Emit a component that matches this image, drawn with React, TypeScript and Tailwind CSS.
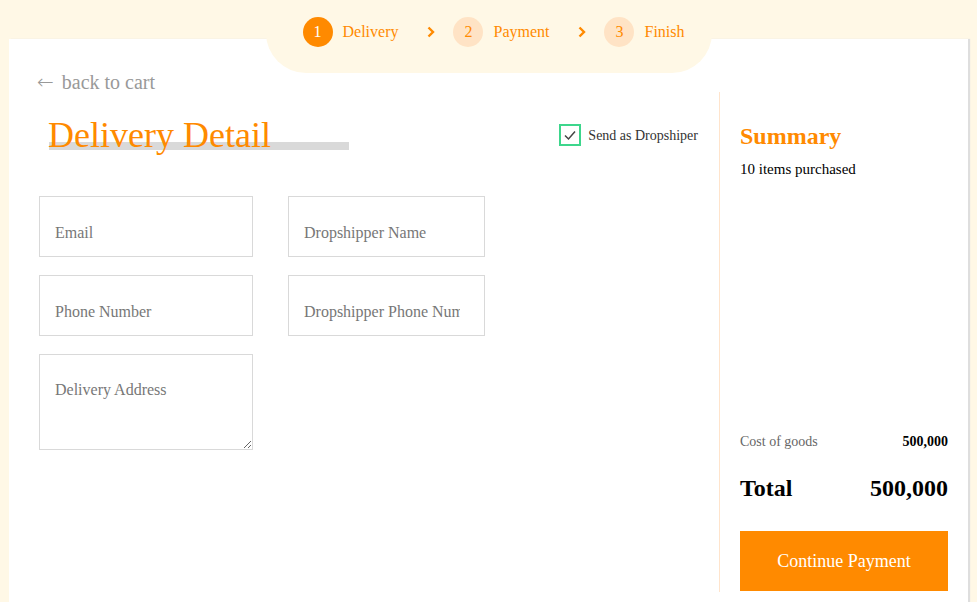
import React from 'react';

const steps = [
    { n: 1, label: 'Delivery', active: true },
    { n: 2, label: 'Payment', active: false },
    { n: 3, label: 'Finish', active: false },
];

const Chevron = () => (
    <svg className="w-[8px] h-[12px]" viewBox="0 0 8 12" fill="none">
        <path d="M1.5 1.5 L6 6 L1.5 10.5" stroke="#FF8A00" strokeWidth="2.4" />
    </svg>
);

const Stepper = () => (
    <div className="absolute top-[-39px] left-1/2 -translate-x-1/2 w-[446px] h-[73px] rounded-b-[40px] bg-[#FFF8E6] flex items-start pt-[17px] pl-[37px]">
        {steps.map((s, i) => (
            <div key={s.n} className="flex items-center">
                <div
                    className={
                        s.active
                            ? 'w-[30px] h-[30px] rounded-full bg-[#FF8A00] text-white flex items-center justify-center text-[16px]'
                            : 'w-[30px] h-[30px] rounded-full bg-[#FFE3C5] text-[#FF8A00] flex items-center justify-center text-[16px]'
                    }
                >
                    {s.n}
                </div>
                <span className="ml-[10px] text-[16px] text-[#FF8A00]">{s.label}</span>
                {i < steps.length - 1 && (
                    <div className="ml-[29px] mr-[18px] flex items-center">
                        <Chevron />
                    </div>
                )}
            </div>
        ))}
    </div>
);

const inputClass =
    'w-full h-[61px] border border-[#d9d9d9] bg-white pt-[22px] pb-[10px] pl-[15px] pr-[24px] text-[16px] leading-[20px] outline-none placeholder:text-[#777]';

export default function App() {
    return (
        <div className="min-h-screen bg-[#FFF8E6] pt-[39px] px-[9px] font-['Liberation_Serif',serif]">
            <div className="relative bg-white h-[563px] flex shadow-[2px_0_1px_#dedede]">
                <Stepper />

                {/* left: form */}
                <div className="flex-1 pl-[28px] pr-[21px] pt-[31px]">
                    <a href="#" className="block text-[20px] leading-[24px] text-[#999]">
                        <span className="font-['DejaVu_Sans',sans-serif] font-light mr-[3px]">←</span> back to cart
                    </a>

                    <div className="mt-[21px] flex items-center justify-between">
                        <div className="relative ml-[11px]">
                            <div className="absolute left-[1px] top-[27px] w-[300px] h-[8px] bg-[#d9d9d9]" />
                            <h1 className="relative text-[36px] leading-[40px] text-[#FF8A00]">Delivery Detail</h1>
                        </div>
                        <label className="flex items-center gap-[7px] text-[14px] text-[#333]">
                            <span className="w-[22px] h-[22px] border-2 border-[#3DD68C] flex items-center justify-center">
                                <svg className="w-[14px] h-[14px]" viewBox="0 0 14 14" fill="none">
                                    <path d="M2 7.5 L5.5 11 L12 3.5" stroke="#444" strokeWidth="1.5" />
                                </svg>
                            </span>
                            Send as Dropshiper
                        </label>
                    </div>

                    <div className="mt-[41px] ml-[2px] grid grid-cols-[214px_197px] gap-x-[35px] gap-y-[18px] items-start">
                        <input className={inputClass} placeholder="Email" />
                        <input className={inputClass} placeholder="Dropshipper Name" />
                        <input className={inputClass} placeholder="Phone Number" />
                        <input className={inputClass} placeholder="Dropshipper Phone Number" />
                        <textarea
                            className="w-full h-[96px] border border-[#d9d9d9] pt-[25px] px-[15px] text-[16px] leading-[20px] outline-none placeholder:text-[#777]"
                            placeholder="Delivery Address"
                        />
                    </div>
                </div>

                {/* right: summary */}
                <div className="w-[249px] mt-[53px] h-[500px] border-l border-[#FFE4CC] px-[20px] pb-[1px] flex flex-col justify-between">
                    <div className="pt-[30px]">
                        <h2 className="text-[24px] leading-[28px] font-bold text-[#FF8A00]">Summary</h2>
                        <p className="mt-[9px] text-[15px] leading-[20px] text-black">10 items purchased</p>
                    </div>
                    <div>
                        <div className="flex justify-between items-center text-[14px] leading-[18px] translate-y-[1px]">
                            <span className="text-[#666]">Cost of goods</span>
                            <span className="font-bold text-black">500,000</span>
                        </div>
                        <div className="mt-[24px] flex justify-between items-center text-[24px] leading-[28px] font-bold text-black">
                            <span>Total</span>
                            <span>500,000</span>
                        </div>
                        <button className="mt-[29px] w-full h-[60px] bg-[#FF8A00] text-white text-[18px]">
                            Continue Payment
                        </button>
                    </div>
                </div>
            </div>
        </div>
    );
}
